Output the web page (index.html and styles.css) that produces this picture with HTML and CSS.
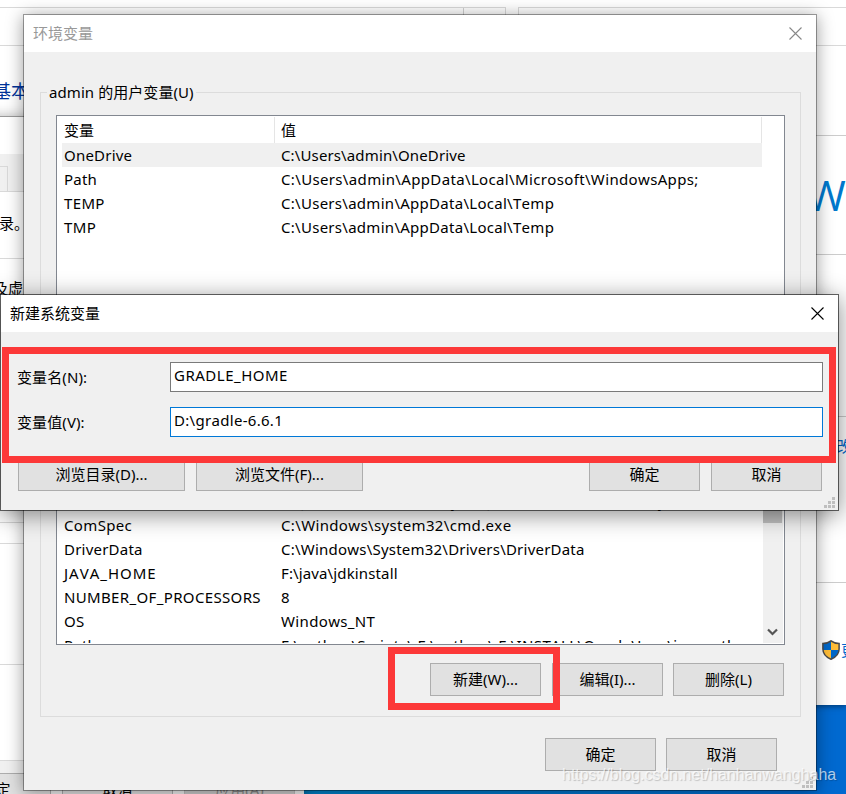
FILE: index.html
```html
<!DOCTYPE html>
<html lang="zh-CN">
<head>
<meta charset="utf-8">
<title>环境变量</title>
<link rel="stylesheet" href="styles.css">
</head>
<body>
<div class="desktop">
  <section class="system-window">
    <i class="rule address"></i><i class="rule search"></i>
    <i class="rule toolbar-line"></i>
    <i class="rule line-1"></i><i class="rule line-2"></i><i class="rule line-3"></i><i class="rule line-4"></i>
    <span class="basic">基本</span>
    <span class="brand">W</span>
    <span class="link change">改</span>
    <svg class="shield" width="18" height="20" viewBox="0 0 18 20">
      <path d="M9 .8C6.500 2.800 3.700 3.400.9 3.400V9c0 4.500 3.200 8.200 8.100 10.200 4.900-2 8.100-5.700 8.100-10.200V3.400C14.300 3.400 11.500 2.800 9 .8Z" fill="#0068c9"/>
      <path d="M9 1C11.500 2.900 14.300 3.500 17 3.500V10H9ZM9 10H1C1.500 14 4.500 17.300 9 19Z" fill="#ffbd38"/>
      <path d="M9 .8C6.500 2.800 3.700 3.400.9 3.400V9c0 4.500 3.200 8.200 8.100 10.200 4.900-2 8.100-5.700 8.100-10.200V3.400C14.300 3.400 11.500 2.800 9 .8Z" fill="none" stroke="#4b4b4b" stroke-width="1.500"/>
    </svg>
    <span class="link key">更</span>
  </section>

  <section class="properties-window">
    <div class="tabs"><i class="tab"></i></div>
    <span class="note admin">录。</span>
    <span class="note memory">及虚</span>
    <i class="rule p1"></i><i class="rule p2"></i><i class="rule p3"></i><i class="rule p4"></i>
    <div class="prop-footer">
      <div class="button">确定</div><div class="button">取消</div><div class="button disabled">应用(A)</div>
    </div>
  </section>

  <section class="dialog env">
    <header class="titlebar">
      <span>环境变量</span>
      <svg class="close" width="13" height="13" viewBox="0 0 13 13"><path d="M.5.5l12 12M12.500.5l-12 12"/></svg>
    </header>
    <div class="group user">
      <div class="legend">admin 的用户变量(U)</div>
      <div class="list">
        <div class="head"><span>变量</span><span>值</span></div>
        <div class="row selected"><span>OneDrive</span><span class="tight">C:\Users\admin\OneDrive</span></div>
        <div class="row"><span>Path</span><span class="loose">C:\Users\admin\AppData\Local\Microsoft\WindowsApps;</span></div>
        <div class="row"><span class="loose">TEMP</span><span class="medium">C:\Users\admin\AppData\Local\Temp</span></div>
        <div class="row"><span class="loose">TMP</span><span class="medium">C:\Users\admin\AppData\Local\Temp</span></div>
      </div>
    </div>
    <div class="group system">
      <div class="list scrolling">
        <div class="rows">
          <div class="row"><span></span><span class="loose">.;%JAVA_HOME%\lib\dt.jar;%JAVA_HOME%\lib\tools.jar</span></div>
          <div class="row"><span class="loose">ComSpec</span><span class="loose">C:\Windows\system32\cmd.exe</span></div>
          <div class="row"><span>DriverData</span><span>C:\Windows\System32\Drivers\DriverData</span></div>
          <div class="row"><span class="wide-caps">JAVA_HOME</span><span class="tight">F:\java\jdkinstall</span></div>
          <div class="row"><span class="loose">NUMBER_OF_PROCESSORS</span><span>8</span></div>
          <div class="row"><span>OS</span><span class="loose">Windows_NT</span></div>
          <div class="row"><span>Path</span><span class="loose">F:\python\Scripts\;F:\python\;F:\INSTALL\Oracle\Java\javapath;</span></div>
        </div>
        <div class="scrollbar">
          <i class="thumb"></i>
          <svg width="11" height="8" viewBox="0 0 11 8"><path d="M1 1.500L5.500 6 10 1.500"/></svg>
        </div>
      </div>
      <div class="actions">
        <div class="button">新建(W)...</div><div class="button">编辑(I)...</div><div class="button">删除(L)</div>
      </div>
    </div>
    <div class="actions footer">
      <div class="button">确定</div><div class="button">取消</div>
    </div>
    <svg class="grip" width="11" height="11" viewBox="0 0 11 11"><path d="M8 0h3v3H8zM4 4h3v3H4zM8 4h3v3H8zM0 8h3v3H0zM4 8h3v3H4zM8 8h3v3H8z"/></svg>
  </section>

  <section class="dialog new-var">
    <header class="titlebar">
      <span>新建系统变量</span>
      <svg class="close" width="13" height="13" viewBox="0 0 13 13"><path d="M.5.5l12 12M12.500.5l-12 12"/></svg>
    </header>
    <div class="form">
      <div class="field"><span>变量名(N):</span><div class="input name">GRADLE_HOME</div></div>
      <div class="field"><span>变量值(V):</span><div class="input focused">D:\gradle-6.6.1</div></div>
    </div>
    <div class="form-actions">
      <div class="button wide">浏览目录(D)...</div><div class="button wide">浏览文件(F)...</div>
      <div class="button ok">确定</div><div class="button">取消</div>
    </div>
    <svg class="grip" width="11" height="11" viewBox="0 0 11 11"><path d="M8 0h3v3H8zM4 4h3v3H4zM8 4h3v3H8zM0 8h3v3H0zM4 8h3v3H4zM8 8h3v3H8z"/></svg>
  </section>

  <div class="mark fields-mark"></div>
  <div class="mark new-mark"></div>
  <div class="watermark">https://blog.csdn.net/hanhanwanghaha</div>
</div>
</body>
</html>
```
FILE: styles.css
```css
* { box-sizing: border-box; }
body { margin: 0; }
.desktop {
  position: relative;
  width: 846px;
  height: 794px;
  overflow: hidden;
  background: linear-gradient(90deg, #0082c8 304px, #0069d0 800px);
  font: 15px/20px "Noto Sans", "Noto Sans CJK SC", sans-serif;
  font-kerning: none;
  color: #000;
}
span, .button, .legend { white-space: nowrap; }

/* System window behind everything */
.system-window {
  position: absolute;
  left: 0;
  top: 0;
  width: 846px;
  height: 705px;
  overflow: hidden;
  background: #fff;
  box-shadow: 0 1px 6px rgba(0, 0, 0, .5);
}
.rule { position: absolute; display: block; height: 1px; background: #d9d9d9; }
.address { left: -1px; top: 7px; width: 507px; height: 12px; background: linear-gradient(90deg, transparent 463px, #d0d0d0 463px, #d0d0d0 464px, transparent 464px); border: 1px solid #d9d9d9; border-bottom: 0; }
.search { left: 518px; top: 7px; width: 340px; height: 12px; background: none; border: 1px solid #d9d9d9; border-bottom: 0; }
.toolbar-line { left: 0; top: 45px; width: 846px; }
.line-1, .line-2, .line-3, .line-4 { left: 800px; width: 46px; background: #ccc; }
.line-1 { top: 135px; }
.line-2 { top: 254px; }
.line-3 { top: 416px; }
.line-4 { top: 582px; }
.basic { position: absolute; left: -7px; top: 81px; font-size: 18px; color: #039; }
.brand { position: absolute; left: 807px; top: 170px; font: 42px/50px "Open Sans", sans-serif; color: #0078cc; }
.link { position: absolute; color: #06c; }
.change { left: 836px; top: 436px; }
.key { left: 841px; top: 640px; }
.shield { position: absolute; left: 822px; top: 640px; }

/* Properties window, lower left */
.properties-window {
  position: absolute;
  left: -60px;
  top: 116px;
  width: 364px;
  height: 700px;
  overflow: hidden;
  background: #fff;
  border-top: 1px solid #999;
  box-shadow: 0 0 12px rgba(0, 0, 0, .3);
}
.tabs { height: 38px; margin-top: 37px; background: #f0f0f0; border-bottom: 1px solid #d9d9d9; padding-top: 12px; }
.tab { display: block; width: 68px; height: 25px; border: 1px solid #d9d9d9; border-bottom: 0; }
.note { position: absolute; }
.admin { left: 59px; top: 96px; }
.memory { left: 53px; top: 161px; }
.p1, .p2, .p3, .p4 { left: 0; width: 200px; }
.p1 { top: 141px; }
.p2 { top: 405px; }
.p3 { top: 426px; }
.p4 { top: 547px; }
.prop-footer { display: flex; gap: 11px; margin-top: 568px; border-top: 1px solid #d9d9d9; background: #f0f0f0; height: 60px; padding: 12px 9px; justify-content: flex-end; }

/* Dialogs */
.dialog { position: absolute; background: #f0f0f0; background-clip: padding-box; border: 1px solid rgba(0, 0, 0, .35); }
.env { left: 23px; top: 14px; width: 794px; height: 777px; box-shadow: 0 2px 16px rgba(0, 0, 0, .38); }
.new-var { left: 0; top: 294px; width: 839px; height: 217px; border-color: rgba(0, 0, 0, .58); box-shadow: 0 4px 22px rgba(0, 0, 0, .45); }
.titlebar { display: flex; align-items: center; justify-content: space-between; height: 37px; padding: 0 14px 0 9px; background: #fff; }
.titlebar span { padding-bottom: 2px; }
.env .titlebar { color: #999; }
.close { fill: none; stroke: #000; stroke-width: 1.1; }
.env .close { stroke: #888; }
.button { display: flex; align-items: center; justify-content: center; width: 111px; height: 33px; padding: 0 0 2px; border: 1px solid #adadad; background: #e1e1e1; flex: none; }
.button.disabled { background: #ccc; border-color: #bfbfbf; color: #888; }
.button.wide { width: 167px; }

.group { width: 761px; margin-left: 16px; border: 1px solid #dcdcdc; padding: 0 15px; }
.user { margin-top: 40px; height: 290px; }
.legend { width: fit-content; height: 20px; margin: -11px 0 0 -9px; padding: 0 2px; background: #f0f0f0; letter-spacing: .07px; }
.list { width: 729px; border: 1px solid #828790; background: #fff; overflow: hidden; }
.user .list { margin-top: 13px; height: 250px; padding-left: 5px; }
.head, .row { display: grid; grid-template-columns: 213px 487px; width: 700px; }
.head { height: 27px; }
.head span { height: 26px; margin-top: 1px; border-right: 1px solid #e5e5e5; padding: 3px 0 0 6px; }
.head span:first-child { padding-left: 2px; }
.row { height: 24px; line-height: 24px; letter-spacing: .22px; }
.row span { padding-left: 6px; overflow: hidden; }
.row span:first-child { padding-left: 2px; }
.tight { letter-spacing: .13px; }
.medium { letter-spacing: .28px; }
.loose { letter-spacing: .35px; }
.wide-caps { letter-spacing: 1px; }
.selected { background: #f0f0f0; }

.system { margin-top: 48px; height: 287px; padding-top: 30px; }
.scrolling { display: flex; justify-content: space-between; height: 184px; padding: 27px 1px 1px 5px; }
.rows { height: 154px; overflow: hidden; }
.scrollbar { display: flex; flex-direction: column; align-items: center; justify-content: space-between; width: 20px; height: 154px; padding: 0 1px 7px 0; background: #f0f0f0; }
.thumb { display: block; width: 19px; height: 34px; background: #c0c0c0; }
.scrollbar svg { fill: none; stroke: #555; stroke-width: 2.2; }
.actions { display: flex; gap: 10px; justify-content: flex-end; margin: 18px 1px 0 0; }
.system .button:first-child { margin-right: 1px; }
.footer { margin: 21px 39px 0 0; }
.grip { position: absolute; right: 3px; bottom: 2px; fill: #bfbfbf; }

.form { display: flex; flex-direction: column; gap: 15px; padding: 30px 15px 0 16px; }
.field { display: flex; justify-content: space-between; line-height: 30px; letter-spacing: .1px; }
.input { width: 653px; height: 30px; border: 1px solid #7a7a7a; background: #fff; padding-left: 3px; line-height: 25px; letter-spacing: .3px; }
.name { letter-spacing: .5px; }
.focused { border-color: #0078d7; }
.form-actions { display: flex; gap: 11px; padding: 21px 16px 0 17px; }
.ok { margin-left: auto; }

/* Annotations */
.mark { position: absolute; border: 7px solid #fc3838; }
.fields-mark { left: 2px; top: 347px; width: 834px; height: 116px; }
.new-mark { left: 388px; top: 647px; width: 172px; height: 63px; }
.watermark { position: absolute; left: 562px; top: 765px; font: 16px/20px "Liberation Sans", sans-serif; letter-spacing: -.02px; color: rgba(255, 255, 255, .7); text-shadow: 1px 1px 1px rgba(0, 0, 0, .2); white-space: nowrap; }
```
